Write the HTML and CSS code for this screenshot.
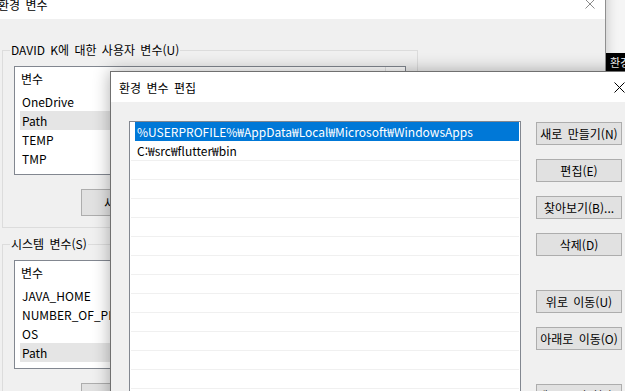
FILE: index.html
```html
<!DOCTYPE html>
<html lang="ko">
<head>
<meta charset="utf-8">
<title>환경 변수 편집</title>
<link rel="stylesheet" href="styles.css">
</head>
<body>
<div class="desk-band">환경 변수 설정</div>

<section class="win win-back">
  <header class="titlebar">
    <span class="title">환경 변수</span>
    <svg class="close close-inactive" width="10" height="10" viewBox="0 0 10 10"><path d="M0.5 0.5L9.5 9.5M9.5 0.5L0.5 9.5" stroke="#8a8a8a" stroke-width="1" fill="none"/></svg>
  </header>
  <div class="back-body">
    <fieldset class="group">
      <legend>DAVID K에 대한 사용자 변수(U)</legend>
      <div class="lv">
        <div class="lv-head"><span class="col-var">변수</span><span class="col-val">값</span></div>
        <div class="lv-row"><span class="lv-cell">OneDrive</span></div>
        <div class="lv-row"><span class="lv-cell is-sel">Path</span></div>
        <div class="lv-row"><span class="lv-cell">TEMP</span></div>
        <div class="lv-row"><span class="lv-cell">TMP</span></div>
      </div>
      <div class="back-btns">
        <button class="btn btn-wide">새로 만들기(N)...</button>
        <button class="btn btn-wide">편집(E)...</button>
        <button class="btn btn-wide">삭제(D)</button>
      </div>
    </fieldset>
    <fieldset class="group">
      <legend>시스템 변수(S)</legend>
      <div class="lv">
        <div class="lv-head"><span class="col-var">변수</span><span class="col-val">값</span></div>
        <div class="lv-row"><span class="lv-cell">JAVA_HOME</span></div>
        <div class="lv-row"><span class="lv-cell">NUMBER_OF_PROCESSORS</span></div>
        <div class="lv-row"><span class="lv-cell">OS</span></div>
        <div class="lv-row"><span class="lv-cell is-sel">Path</span></div>
      </div>
      <div class="back-btns">
        <button class="btn btn-wide">새로 만들기(W)...</button>
        <button class="btn btn-wide">편집(I)...</button>
        <button class="btn btn-wide">삭제(L)</button>
      </div>
    </fieldset>
  </div>
</section>

<section class="win win-front">
  <header class="titlebar">
    <span class="title">환경 변수 편집</span>
    <svg class="close" width="11" height="11" viewBox="0 0 11 11"><path d="M0.5 0.5L10.5 10.5M10.5 0.5L0.5 10.5" stroke="#000" stroke-width="1" fill="none"/></svg>
  </header>
  <div class="front-body">
    <div class="plist">
      <div class="prow prow-sel"><span class="pcell">%USERPROFILE%₩AppData₩Local₩Microsoft₩WindowsApps</span></div>
      <div class="prow"><span class="pcell">C:₩src₩flutter₩bin</span></div>
      <div class="prow"></div>
      <div class="prow"></div>
      <div class="prow"></div>
      <div class="prow"></div>
      <div class="prow"></div>
      <div class="prow"></div>
      <div class="prow"></div>
      <div class="prow"></div>
      <div class="prow"></div>
      <div class="prow"></div>
      <div class="prow"></div>
      <div class="prow"></div>
    </div>
    <div class="side-btns">
      <button class="btn">새로 만들기(N)</button>
      <button class="btn">편집(E)</button>
      <button class="btn">찾아보기(B)...</button>
      <button class="btn">삭제(D)</button>
      <button class="btn btn-gap">위로 이동(U)</button>
      <button class="btn">아래로 이동(O)</button>
      <button class="btn btn-gap">텍스트 편집(T)...</button>
    </div>
  </div>
</section>
</body>
</html>
```

FILE: styles.css
```css
* { box-sizing: border-box; }
html, body { margin: 0; padding: 0; }
body {
  width: 625px;
  height: 391px;
  overflow: hidden;
  position: relative;
  background: #f5f5f5;
  font-family: "Noto Sans CJK KR", "Noto Sans", sans-serif;
  font-size: 12px;
  word-spacing: 2px;
  color: #000;
}

.desk-band {
  position: absolute;
  left: 606px;
  top: 53px;
  width: 40px;
  height: 18px;
  background: #000;
  color: #fff;
  font-size: 11px;
  line-height: 18px;
  white-space: nowrap;
  overflow: hidden;
  padding-left: 4px;
}

.win {
  position: absolute;
  background: #f0f0f0;
  display: flex;
  flex-direction: column;
  overflow: hidden;
}
.win-back {
  left: -10px;
  top: -12px;
  width: 616px;
  height: 440px;
  border: 1px solid #8f8f8f;
  box-shadow: 0 0 12px rgba(0, 0, 0, 0.22);
}
.win-front {
  left: 110px;
  top: 71px;
  width: 525px;
  height: 380px;
  border: 1px solid #707070;
  box-shadow: 0 0 16px rgba(0, 0, 0, 0.32);
}

.titlebar {
  flex: none;
  height: 30px;
  background: #fff;
  display: flex;
  align-items: center;
  justify-content: space-between;
  padding: 0 10px 0 7px;
}
.win-front .titlebar { padding: 0 9px 0 8px; }
.close { display: block; }

/* back window */
.back-body {
  padding: 23px 11px 0 11px;
  display: flex;
  flex-direction: column;
  gap: 8px;
}
.group {
  margin: 0;
  width: 416px;
  min-width: 0;
  padding: 0 11px 11px;
  border: 1px solid #dcdcdc;
}
.group legend {
  padding: 0 1px;
  margin-left: -4px;
  line-height: 16px;
  height: 16px;
}
.lv {
  margin-top: 8px;
  width: 392px;
  height: 109px;
  border: 1px solid #828790;
  background: #fff;
  overflow: hidden;
}
.lv-head {
  height: 25px;
  display: flex;
  align-items: center;
}
.col-var {
  width: 371px;
  padding-left: 6px;
  border-right: 1px solid #e5e5e5;
  height: 25px;
  line-height: 24px;
}
.col-val { padding-left: 6px; }
.lv-row {
  height: 19px;
  padding-left: 5px;
  display: flex;
}
.lv-cell {
  flex: 1;
  padding-left: 2px;
  line-height: 19px;
  white-space: nowrap;
}
.lv-cell.is-sel { background: #e5e5e5; }

.back-btns {
  margin-top: 14px;
  margin-left: 67px;
  display: flex;
  gap: 8px;
}
.btn {
  font: inherit;
  word-spacing: 2px;
  color: #000;
  background: #e1e1e1;
  border: 1px solid #adadad;
  border-radius: 0;
  padding: 0;
  margin: 0;
  height: 23px;
  width: 86px;
  line-height: 20px;
  white-space: nowrap;
  text-align: center;
}
.btn-wide {
  width: 134px;
  height: 27px;
  flex: none;
}

/* front window */
.front-body {
  flex: 1;
  display: flex;
  gap: 15px;
  padding: 19px 0 0 18px;
}
.plist {
  width: 392px;
  height: 330px;
  border: 1px solid #828790;
  background: #fff;
  padding: 0 1px;
}
.prow {
  height: 19px;
  border-bottom: 1px solid #f0f0f0;
}
.prow-sel {
  height: 20px;
  border-bottom-color: #fff;
  padding-left: 4px;
  display: flex;
}
.pcell {
  display: block;
  padding-left: 6px;
  line-height: 18px;
  white-space: nowrap;
}
.prow-sel .pcell {
  flex: 1;
  padding-left: 2px;
  background: #0078d7;
  color: #fff;
  line-height: 19px;
}
.side-btns {
  margin-top: 1px;
  display: flex;
  flex-direction: column;
  gap: 14px;
}
.btn-gap { margin-top: 20px; }
```
